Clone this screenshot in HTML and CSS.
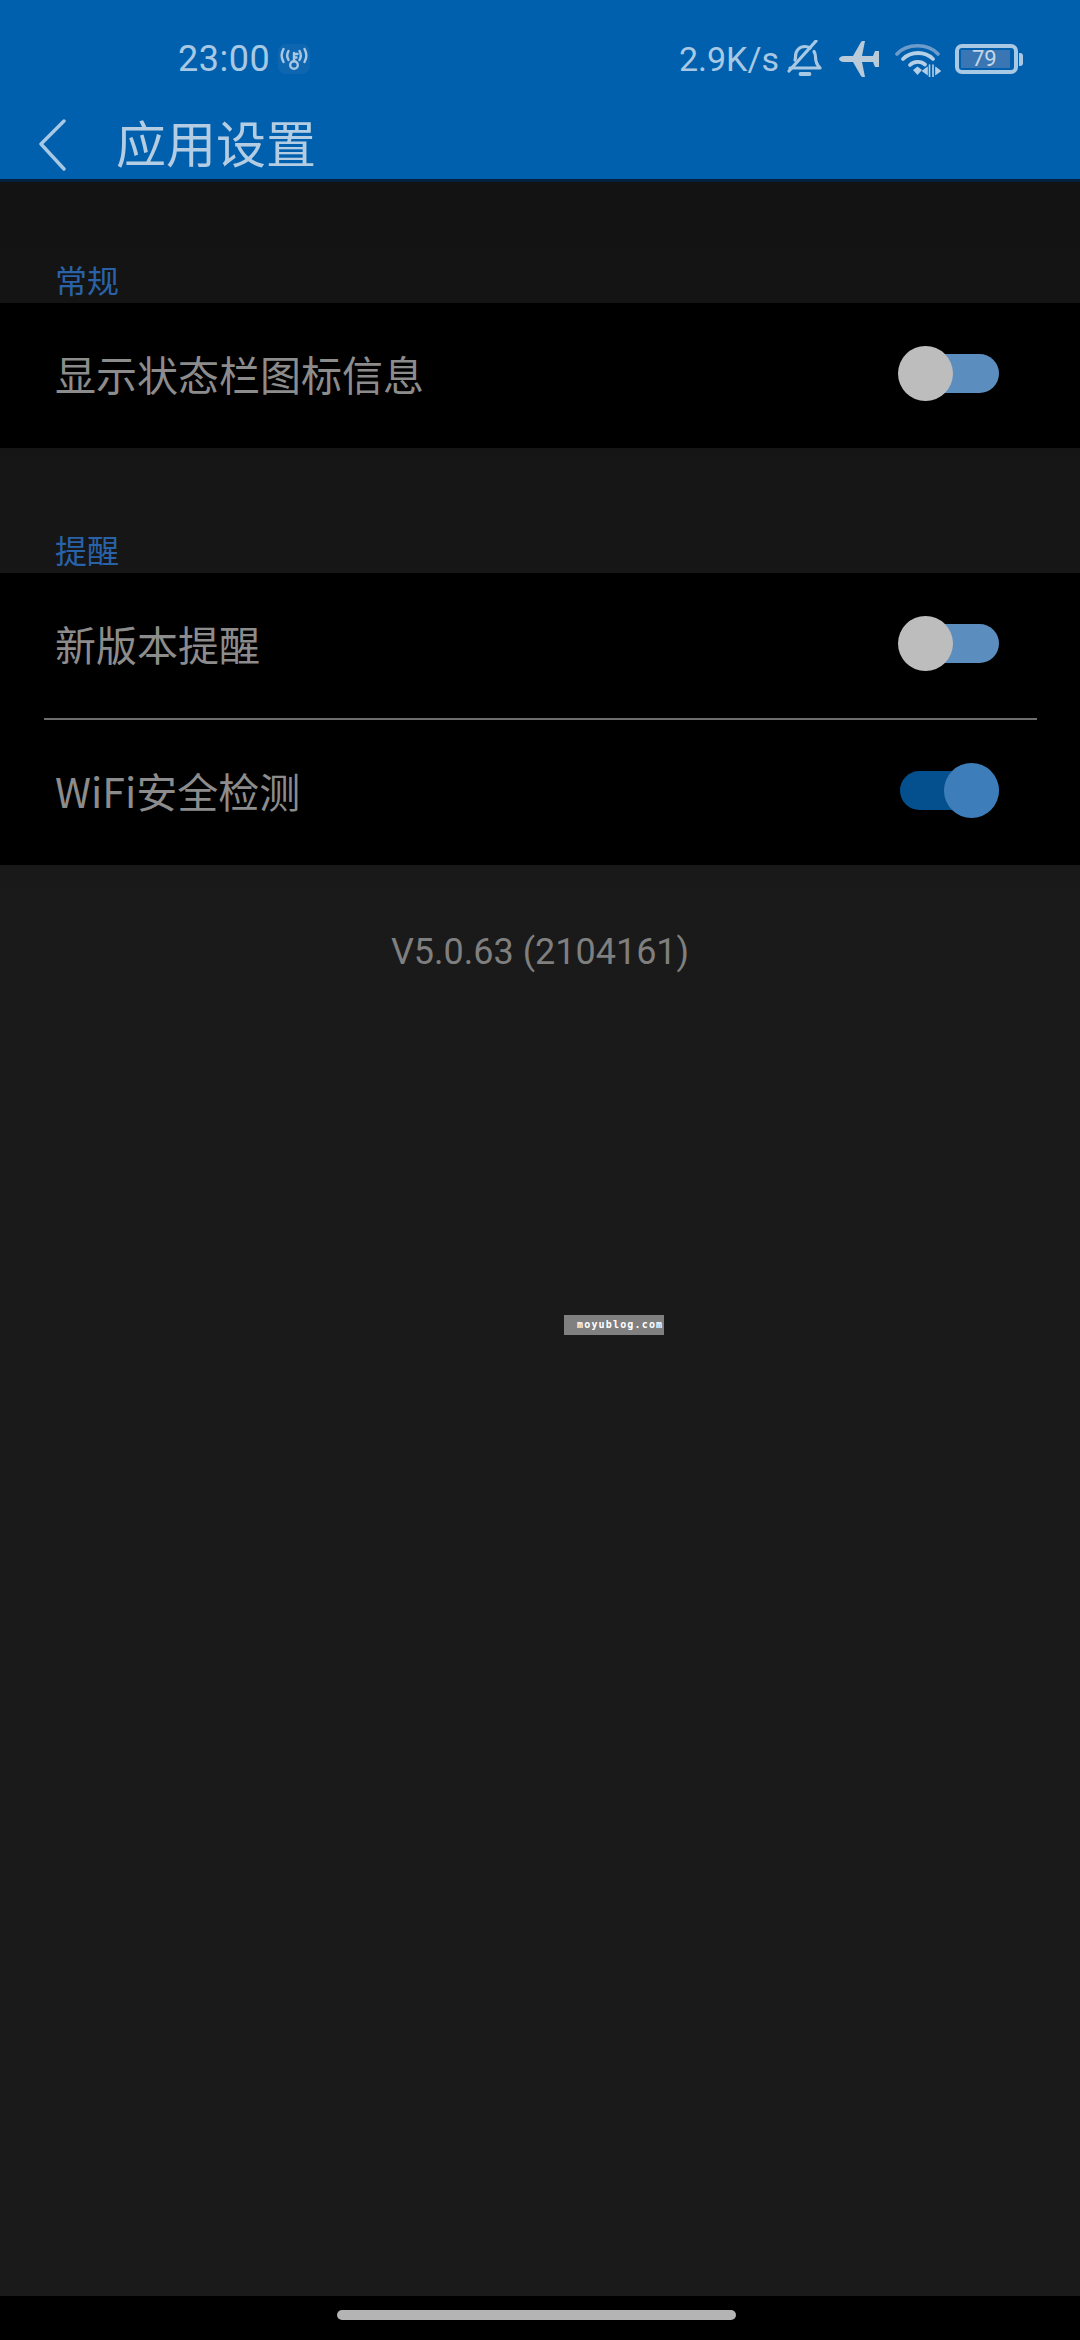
FILE: index.html
```html
<!doctype html>
<html lang="zh-CN">
<head>
    <meta charset="UTF-8">
    <title>应用设置</title>
    <link rel="stylesheet" href="styles.css">
</head>
<body>
<div id="page">
    <header id="header">
        <div id="status">
            <div id="statusLeft">
                <span class="clock">23:00</span>
                <span class="hotspot">
                    <svg width="28" height="24" viewBox="0 0 28 24" fill="none" stroke="#a9c8e4" stroke-width="2.400" stroke-linecap="round">
                        <circle cx="14" cy="18" r="3.800"/>
                        <path d="M14 14V6M14 7h3.500M14 10.500h2.500"/>
                        <path d="M8.500 4a9 9 0 0 0 0 9M19.500 4a9 9 0 0 1 0 9"/>
                        <path d="M3.500 2a13 13 0 0 0 0 13M24.500 2a13 13 0 0 1 0 13"/>
                    </svg>
                </span>
            </div>
            <div id="statusRight">
                <span class="speed">2.9K/s</span>
                <svg class="iconBell" width="36" height="38" viewBox="0 0 36 38" fill="none" stroke="#a9c8e4" stroke-width="3.200" stroke-linecap="round" stroke-linejoin="round">
                    <path d="M3 28h30c-3-3-4.500-6-4.500-11 0-2-.5-4-1.500-5.500M8 20c.5-1 .5-2 .5-3.500 0-6 4-10 9.500-10 2 0 3.500.5 5 1.500"/>
                    <path d="M2 31 29 1"/>
                    <path d="M13.500 34h9" stroke-width="3.800"/>
                </svg>
                <svg class="iconPlane" width="42" height="36" viewBox="0 0 42 36" fill="#b9cad9">
                    <path d="M0 18c0-1.500 2-3 5-3h9l8-14c.5-1 2.500-1.500 4-1l-3 15h11l2-5h4v16h-4l-2-5H23l3 15c-1.500.5-3.500 0-4-1l-8-14H5c-3 0-5-1.500-5-3z"/>
                </svg>
                <svg class="iconWifi" width="46" height="36" viewBox="0 0 46 36" fill="none" stroke-linecap="round">
                    <path d="M2 13C12 2 33 2 43 13" stroke="#6d9ccb" stroke-width="3.600"/>
                    <path d="M8 18c8-8 22-8 30 0" stroke="#b4cfe6" stroke-width="3.800"/>
                    <path d="M15 24c4-4 11-4 15-.5" stroke="#b4cfe6" stroke-width="3.800"/>
                    <path d="M18 29l4.500-3.500 4.500 3.500-4.500 5z" fill="#b4cfe6"/>
                    <path d="M32 27l-4 3 4 3zM38 24v12M34.500 24v12M41 27l4 3-4 3z" fill="#b4cfe6" stroke="#b4cfe6" stroke-width="1.600"/>
                </svg>
                <span class="battery">
                    <span class="batteryBody">
                        <span class="batteryFill">79</span>
                    </span>
                    <span class="batteryCap"></span>
                </span>
            </div>
        </div>
        <div id="toolbar">
            <svg class="back" width="30" height="52" viewBox="0 0 30 52" fill="none" stroke="#a9c8e4" stroke-width="3.400" stroke-linecap="round" stroke-linejoin="round">
                <path d="M26 2 3 25l23 25"/>
            </svg>
            <h1>应用设置</h1>
        </div>
    </header>

    <main id="content">
        <div class="label labelFirst">常规</div>
        <section class="group">
            <div class="row">
                <span class="rowText">显示状态栏图标信息</span>
                <span class="switch"><i class="track"></i><i class="knob"></i></span>
            </div>
        </section>

        <div class="label">提醒</div>
        <section class="group">
            <div class="row">
                <span class="rowText">新版本提醒</span>
                <span class="switch"><i class="track"></i><i class="knob"></i></span>
            </div>
            <div class="line"></div>
            <div class="row">
                <span class="rowText">WiFi安全检测</span>
                <span class="switch on"><i class="track"></i><i class="knob"></i></span>
            </div>
        </section>

        <p id="version">V5.0.63 (2104161)</p>
        <span id="mark">moyublog.com</span>
    </main>

    <footer id="navBar">
        <div id="homePill"></div>
    </footer>
</div>
</body>
</html>
```

FILE: styles.css
```css
*{
    margin: 0;
    padding: 0;
    box-sizing: border-box;
}
html,body{
    width: 1080px;
    height: 2340px;
    overflow: hidden;
    background: #000;
}
body{
    font-family: "Noto Sans CJK SC", "Noto Sans", sans-serif;
}
#page{
    height: 2340px;
    display: flex;
    flex-direction: column;
}

/* top blue part */
#header{
    height: 182px;
    flex: none;
    background: #0060ad;
    border-bottom: 3px solid #03213f;
    color: #a9c8e4;
}
#status{
    height: 116px;
    padding: 2px 57px 0 178px;
    display: flex;
    justify-content: space-between;
    align-items: center;
}
#statusLeft,#statusRight{
    display: flex;
    align-items: center;
}
.clock{
    font-family: "Roboto", sans-serif;
    font-size: 36px;
    letter-spacing: .5px;
}
.hotspot{
    width: 32px;
    height: 30px;
    margin-left: 8px;
    border-radius: 8px;
    background: #0e66b0;
    display: flex;
    align-items: center;
    justify-content: center;
}
.speed{
    font-family: "Roboto", sans-serif;
    font-size: 34px;
}
.iconBell{
    margin-left: 8px;
}
.iconPlane{
    margin-left: 16px;
}
.iconWifi{
    margin-left: 14px;
}
.battery{
    margin-left: 14px;
    display: flex;
    align-items: center;
}
.batteryBody{
    width: 63px;
    height: 30px;
    border: 4px solid #a9c8e4;
    border-radius: 7px;
    padding: 2px;
    display: block;
}
.batteryFill{
    display: block;
    width: 49px;
    height: 18px;
    padding-left: 11px;
    background: #3a76b4;
    color: #c4d6e6;
    font-family: "Roboto", sans-serif;
    font-size: 22px;
    line-height: 18px;
}
.batteryCap{
    width: 4px;
    height: 13px;
    margin-left: 1px;
    border-radius: 0 3px 3px 0;
    background: #a9c8e4;
}
#toolbar{
    height: 63px;
    padding: 0 0 6px 38px;
    display: flex;
    align-items: center;
}
h1{
    margin: 0 0 8px 48px;
    font-size: 50px;
    font-weight: 400;
    line-height: 60px;
    color: #b4cde2;
}

/* list */
#content{
    flex: 1;
    position: relative;
    background: linear-gradient(#131313, #1a1a1a 800px);
}
.label{
    height: 125px;
    padding: 80px 0 0 55px;
    font-size: 32px;
    line-height: 42px;
    color: #2a62a8;
}
.labelFirst{
    height: 121px;
    padding-top: 76px;
}
.group{
    background: #000;
}
.row{
    height: 145px;
    padding: 0 81px 0 55px;
    display: flex;
    align-items: center;
    justify-content: space-between;
}
.rowText{
    padding-bottom: 6px;
    font-size: 41px;
    line-height: 50px;
    color: #8c8c8c;
}
.line{
    height: 2px;
    margin: 0 43px 0 44px;
    background: #6e6e6e;
}
.switch{
    width: 101px;
    height: 55px;
    position: relative;
    display: block;
    margin-top: -5px;
}
.track{
    position: absolute;
    left: 2px;
    right: 0;
    top: 8px;
    height: 39px;
    border-radius: 20px;
    background: #5b8dbf;
}
.knob{
    position: absolute;
    left: 0;
    top: 0;
    width: 55px;
    height: 55px;
    border-radius: 50%;
    background: #bdbdbd;
}
.on .track{
    background: #04508f;
}
.on .knob{
    left: 46px;
    background: #3d7db9;
}
#version{
    margin-top: 65px;
    text-align: center;
    font-family: "Roboto", sans-serif;
    font-size: 36px;
    line-height: 44px;
    color: #7f7f7f;
}
#mark{
    position: absolute;
    left: 564px;
    top: 1133px;
    width: 100px;
    height: 20px;
    padding: 3px 0 0 13px;
    background: #808080;
    color: #fff;
    font-family: "DejaVu Sans Mono", monospace;
    font-size: 10px;
    font-weight: bold;
    line-height: 14px;
    letter-spacing: 1.170px;
    white-space: nowrap;
}

/* gesture bar */
#navBar{
    height: 44px;
    flex: none;
    background: #000;
    padding: 14px 0 0 337px;
}
#homePill{
    width: 399px;
    height: 10px;
    border-radius: 5px;
    background: #b4b4b4;
}
```
